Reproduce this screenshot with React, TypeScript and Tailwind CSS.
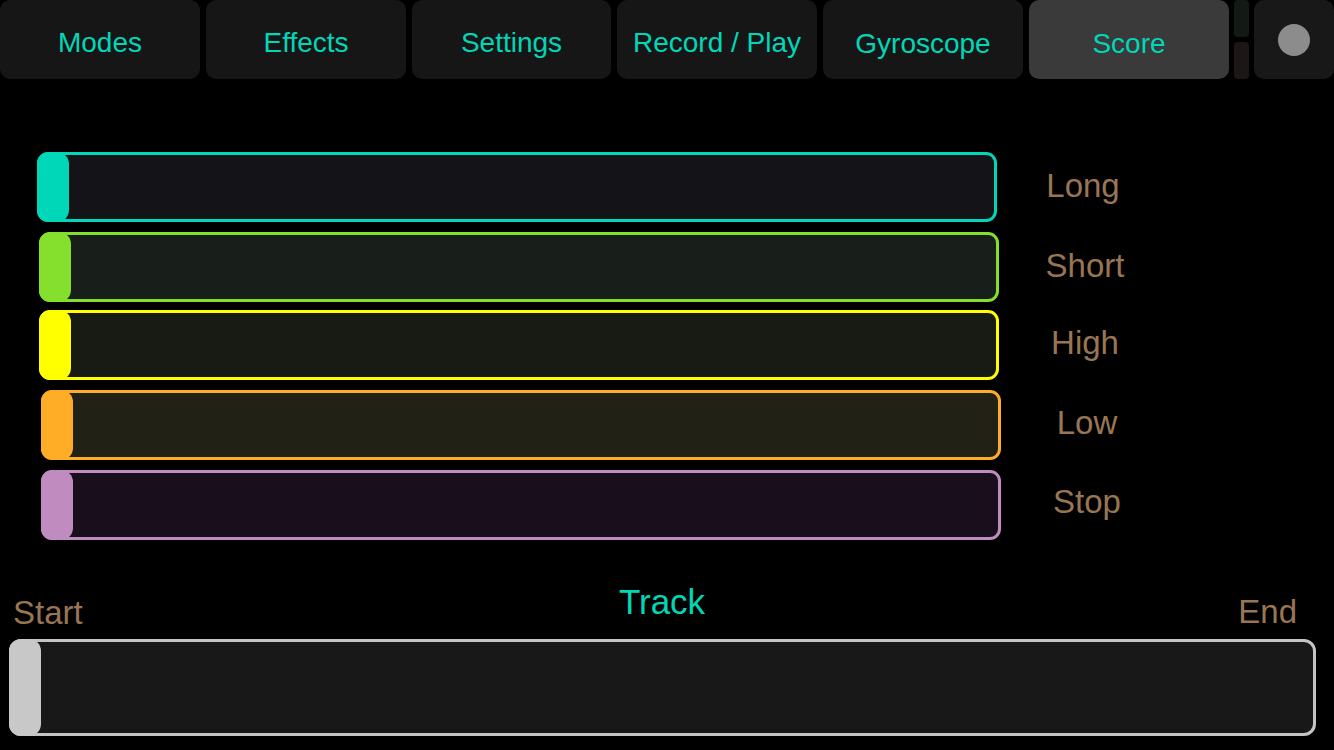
import React from "react";

const tabs = [
  { t: "Modes", w: "w-[200px]", pt: "pt-[6px]", bg: "bg-[#161616]" },
  { t: "Effects", w: "w-[200px]", pt: "pt-[6px]", bg: "bg-[#161616]" },
  { t: "Settings", w: "w-[199px]", pt: "pt-[6px]", bg: "bg-[#161616]" },
  { t: "Record / Play", w: "w-[200px]", pt: "pt-[6px]", bg: "bg-[#161616]" },
  { t: "Gyroscope", w: "w-[200px]", pt: "pt-[9px]", bg: "bg-[#161616]" },
  { t: "Score", w: "w-[200px]", pt: "pt-[9px]", bg: "bg-[#3a3a3a]" },
];

type Row = {
  label: string;
  rowClass: string;
  boxClass: string;
  knobClass: string;
  labelClass: string;
};

const rows: Row[] = [
  {
    label: "Long",
    rowClass: "ml-[37px]",
    boxClass: "border-[#00d7b9] bg-[#131318]",
    knobClass: "bg-[#00d7b9]",
    labelClass: "-mt-[3px]",
  },
  {
    label: "Short",
    rowClass: "ml-[39px] mt-[10px]",
    boxClass: "border-[#84e02d] bg-[#181f1a]",
    knobClass: "bg-[#84e02d]",
    labelClass: "-mt-[3px]",
  },
  {
    label: "High",
    rowClass: "ml-[39px] mt-[8px]",
    boxClass: "border-[#ffff00] bg-[#181a14]",
    knobClass: "bg-[#ffff00]",
    labelClass: "-mt-[6px]",
  },
  {
    label: "Low",
    rowClass: "ml-[41px] mt-[10px]",
    boxClass: "border-[#ffad27] bg-[#212116]",
    knobClass: "bg-[#ffad27]",
    labelClass: "-mt-[5px]",
  },
  {
    label: "Stop",
    rowClass: "ml-[41px] mt-[10px]",
    boxClass: "border-[#c08cc0] bg-[#180e1c]",
    knobClass: "bg-[#c08cc0]",
    labelClass: "-mt-[7px]",
  },
];

export default function App() {
  return (
    <div
      className="w-[1334px] h-[750px] bg-black overflow-hidden flex flex-col"
      style={{ fontFamily: '"Liberation Sans", Arial, Helvetica, sans-serif' }}
    >
      {/* Top bar */}
      <div className="flex h-[79px]">
        <div className="flex gap-[6px]">
          {tabs.map((t) => (
            <div
              key={t.t}
              className={`${t.w} ${t.pt} ${t.bg} h-[79px] rounded-[10px] flex items-center justify-center text-[28px] leading-none text-[#00d7b9]`}
            >
              {t.t}
            </div>
          ))}
        </div>
        <div className="ml-[5px] w-[15px] flex flex-col justify-between">
          <div className="h-[37px] rounded-[4px] bg-[#131a14]" />
          <div className="h-[37px] rounded-[4px] bg-[#1c1614]" />
        </div>
        <div className="ml-[5px] w-[80px] h-[79px] rounded-[10px] bg-[#181818] flex items-center justify-center">
          <div className="w-[32px] h-[32px] rounded-full bg-[#8c8c8c] ml-[-1px]" />
        </div>
      </div>

      {/* Sliders */}
      <div className="flex flex-col mt-[73px]">
        {rows.map((r) => (
          <div key={r.label} className={`flex items-center ${r.rowClass}`}>
            <div className={`relative w-[960px] h-[70px] rounded-[11px] border-[3px] ${r.boxClass}`}>
              <div
                className={`absolute -left-[3px] -top-[3px] -bottom-[3px] w-[32px] rounded-[12px] ${r.knobClass}`}
              />
            </div>
            <div className={`w-[172px] text-center text-[33px] leading-none text-[#987654] ${r.labelClass}`}>
              {r.label}
            </div>
          </div>
        ))}
      </div>

      {/* Track */}
      <div className="mt-[43px] h-[56px] grid grid-cols-[1fr_auto_1fr] items-start">
        <div className="justify-self-start ml-[13px] mt-[13px] text-[33px] leading-none text-[#987654]">
          Start
        </div>
        <div className="pr-[10px] mt-[1px] text-[35px] leading-none text-[#00d7b9]">Track</div>
        <div className="justify-self-end mr-[37px] mt-[12px] text-[33px] leading-none text-[#987654]">
          End
        </div>
      </div>
      <div className="relative ml-[9px] w-[1307px] h-[97px] rounded-[12px] border-[3px] border-[#c4c4c4] bg-[#181818]">
        <div className="absolute -left-[3px] -top-[3px] -bottom-[3px] w-[32px] rounded-[12px] bg-[#c8c8c8]" />
      </div>
    </div>
  );
}
